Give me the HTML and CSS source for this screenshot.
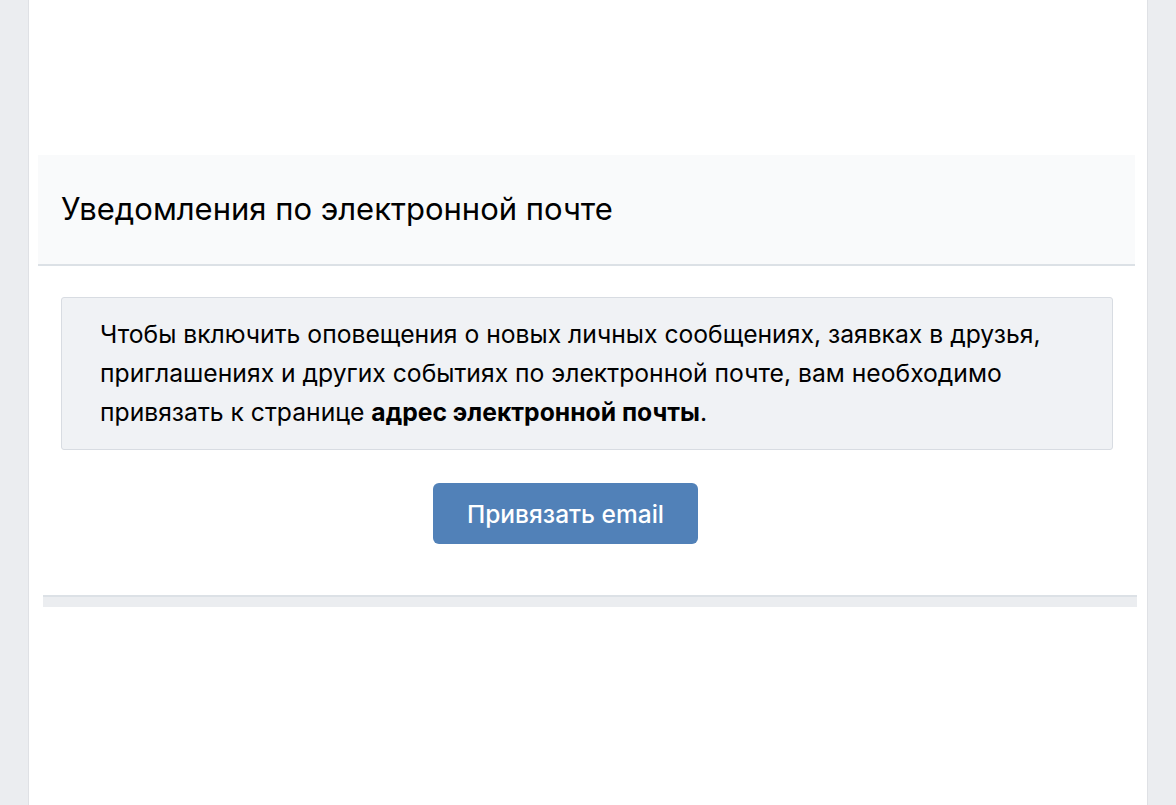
FILE: index.html
```html
<!doctype html>
<html lang="ru">
<head>
  <meta charset="UTF-8">
  <title>Уведомления по электронной почте</title>
  <link rel="stylesheet" href="styles.css">
</head>
<body>
  <div class="page">
    <div class="card">
      <div class="head">
        <h2 class="title">Уведомления по электронной почте</h2>
      </div>
      <div class="info">
        Чтобы включить оповещения о новых личных сообщениях, заявках в друзья,
        приглашениях и других событиях по электронной почте, вам необходимо
        привязать к странице <b>адрес электронной почты</b>.
      </div>
      <div class="actions">
        <button class="btn" type="button">Привязать email</button>
      </div>
      <div class="sep"></div>
    </div>
  </div>
</body>
</html>
```

FILE: styles.css
```css
*{margin:0;
  padding:0;
  box-sizing:border-box;}
body{background:#ebedf0;
     font-family:Inter, "Noto Sans", sans-serif;
     color:#000;}
.page{height:805px;
      overflow:hidden;}
.card{margin-left:28px;
      width:1120px;
      height:805px;
      background:#fff;
      border-left:1px solid #dfe1e5;
      border-right:1px solid #dfe1e5;
      padding-top:155px;}
.head{margin:0 12px 0 9px;
      height:111px;
      background:#f9fafb;
      border-bottom:2px solid #dce1e6;
      display:flex;
      align-items:center;
      padding-left:23px;
      padding-bottom:2px;}
.title{font-size:31px;
       font-weight:400;}
.info{margin:31px 34px 0 32px;
      height:153px;
      background:#f0f2f5;
      border:1px solid #d8dce2;
      border-radius:3px;
      padding:17px 40px 0 38px;
      font-size:24.7px;
      line-height:39px;}
.info b{font-weight:700;}
.actions{display:flex;
         justify-content:center;
         padding-right:45px;
         margin-top:33px;}
.btn{width:265px;
     height:61px;
     border:0;
     border-radius:6px;
     background:#5181b8;
     color:#fff;
     font-family:inherit;
     font-size:24.5px;
     font-weight:500;
     cursor:pointer;}
.sep{margin:51px 10px 0 14px;
     height:12px;
     background:#ebedf0;
     border-top:2px solid #dce1e6;}
```
